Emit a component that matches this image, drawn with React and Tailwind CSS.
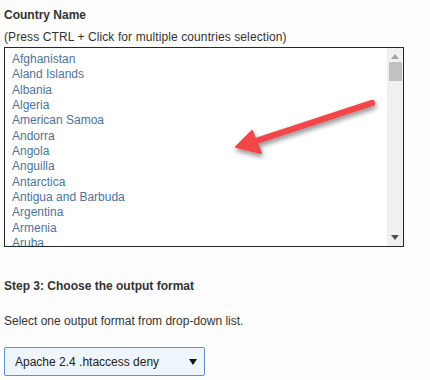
const countries = [
  'Afghanistan',
  'Aland Islands',
  'Albania',
  'Algeria',
  'American Samoa',
  'Andorra',
  'Angola',
  'Anguilla',
  'Antarctica',
  'Antigua and Barbuda',
  'Argentina',
  'Armenia',
  'Aruba',
];

const App = () => {
  return (
    <div className="relative min-h-[380px] bg-[#fcfdfc] px-1 pt-[7px] font-['Liberation_Sans',Arial,sans-serif] text-[12px] text-[#333]">
      <h3 className="font-bold leading-[17px]">Country Name</h3>
      <p className="mt-[5px] leading-[17px] tracking-[0.1px]">(Press CTRL + Click for multiple countries selection)</p>

      <div className="mt-[1px] flex h-[200px] w-[400px] overflow-hidden border border-[#1e2a33] bg-white">
        <ul className="flex-1 overflow-hidden pl-[7px] pt-[4px] leading-[15.35px] text-[#4b73a0]">
          {countries.map((country) => (
            <li key={country}>{country}</li>
          ))}
        </ul>
        <div className="flex w-[16px] flex-col items-center bg-[#f0f0f0]">
          <svg width="8" height="5" viewBox="0 0 8 5" className="mt-[6px]">
            <path d="M0 5 L4 0 L8 5 Z" fill="#a3a3a3" />
          </svg>
          <div className="mt-[3px] h-[19px] w-[13px] bg-[#c1c1c1]" />
          <div className="flex-1" />
          <svg width="8" height="5" viewBox="0 0 8 5" className="mb-[6px]">
            <path d="M0 0 L8 0 L4 5 Z" fill="#505050" />
          </svg>
        </div>
      </div>

      <h3 className="mt-[31px] font-bold leading-[17px]">Step 3: Choose the output format</h3>
      <p className="mt-[18px] leading-[17px]">Select one output format from drop-down list.</p>

      <div className="mt-[17px] flex h-[29px] w-[201px] items-center justify-between rounded-[2px] border border-[#5b8fd6] bg-[#eef5fb] pl-[10px] pr-[7px] text-[#222]">
        <span>Apache 2.4 .htaccess deny</span>
        <svg width="8" height="6" viewBox="0 0 8 6">
          <path d="M0 0 L8 0 L4 6 Z" fill="#111" />
        </svg>
      </div>

      {/* annotation arrow over the list */}
      <svg className="pointer-events-none absolute left-[225px] top-[90px]" width="160" height="70" viewBox="0 0 160 70">
        <defs>
          <filter id="shadow" x="-20%" y="-40%" width="140%" height="180%">
            <feDropShadow dx="1" dy="3" stdDeviation="2.5" floodColor="#000" floodOpacity="0.45" />
          </filter>
        </defs>
        <g filter="url(#shadow)">
          <line x1="147" y1="13" x2="28" y2="52" stroke="#f2474a" strokeWidth="6.5" strokeLinecap="round" />
          <path d="M11 57 L27 41 L36 63 Z" fill="#f2474a" stroke="#f2474a" strokeWidth="2" strokeLinejoin="round" />
        </g>
      </svg>
    </div>
  );
};

export default App;
